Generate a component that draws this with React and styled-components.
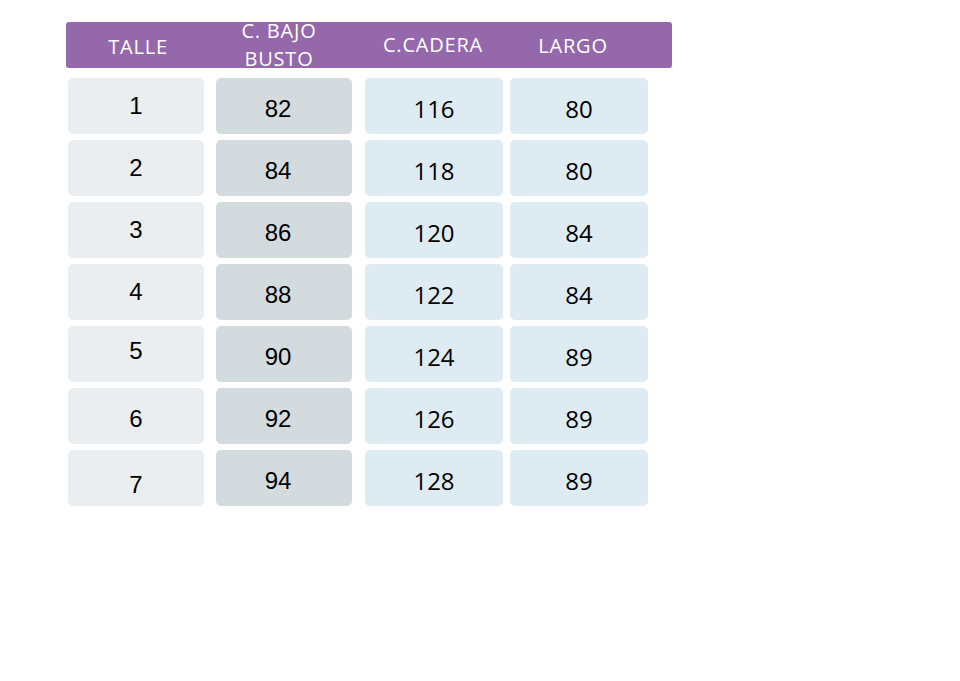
import React from "react";
import styled, { createGlobalStyle } from "styled-components";

const Global = createGlobalStyle`
  html, body { margin: 0; padding: 0; background: #ffffff; }
  body {
    width: 960px;
    height: 681px;
    overflow: hidden;
    font-family: "Liberation Sans", Arial, sans-serif;
  }
`;

const Page = styled.main`
  padding: 22px 0 0 66px;
`;

const Table = styled.section`
  width: 606px;
  display: flex;
  flex-direction: column;
  gap: 10px;
`;

const HeaderBar = styled.div`
  height: 46px;
  background: #9468ab;
  border-radius: 3px;
  display: grid;
  grid-template-columns: 144px 138px 170px 110px;
  grid-template-rows: 46px;
  align-items: center;
`;

const HeadCell = styled.div`
  text-align: center;
  color: #ffffff;
  font-family: "Open Sans", "Noto Sans", sans-serif;
  font-size: 20px;
  font-weight: 500;
  letter-spacing: 0.8px;
  line-height: 28px;
  white-space: nowrap;
  padding-top: ${(p) => (p.$dy > 0 ? p.$dy * 2 : 0)}px;
  padding-bottom: ${(p) => (p.$dy < 0 ? -p.$dy * 2 : 0)}px;
`;

const Body = styled.div`
  display: grid;
  grid-template-columns: 148px 149px 145px 138px;
  grid-auto-rows: 56px;
  row-gap: 6px;
  padding-left: 2px;
`;

const kinds = {
  talle: { bg: "#ebeef1", w: 136, font: '"Liberation Sans", Arial, sans-serif', pr: 0, pt: 0 },
  busto: { bg: "#d4dbdf", w: 136, font: '"Liberation Sans", Arial, sans-serif', pr: 12, pt: 5 },
  cadera: { bg: "#deebf3", w: 138, font: '"Open Sans", "Noto Sans", sans-serif', pr: 0, pt: 5 },
  largo: { bg: "#deebf3", w: 138, font: '"Open Sans", "Noto Sans", sans-serif', pr: 0, pt: 5 },
};

const Cell = styled.div`
  width: ${(p) => kinds[p.$kind].w}px;
  box-sizing: border-box;
  background: ${(p) => kinds[p.$kind].bg};
  border-radius: 5px;
  display: flex;
  align-items: center;
  justify-content: center;
  color: #000000;
  font-family: ${(p) => kinds[p.$kind].font};
  font-size: 24px;
  line-height: 1;
  padding-right: ${(p) => kinds[p.$kind].pr}px;
  padding-top: ${(p) => kinds[p.$kind].pt + (p.$dy > 0 ? p.$dy * 2 : 0)}px;
  padding-bottom: ${(p) => (p.$dy < 0 ? -p.$dy * 2 : 0)}px;
`;

const rows = [
  { talle: "1", busto: "82", cadera: "116", largo: "80", dy: 0 },
  { talle: "2", busto: "84", cadera: "118", largo: "80", dy: 0 },
  { talle: "3", busto: "86", cadera: "120", largo: "84", dy: 0 },
  { talle: "4", busto: "88", cadera: "122", largo: "84", dy: 0 },
  { talle: "5", busto: "90", cadera: "124", largo: "89", dy: -3 },
  { talle: "6", busto: "92", cadera: "126", largo: "89", dy: 3 },
  { talle: "7", busto: "94", cadera: "128", largo: "89", dy: 7 },
];

export default function App() {
  return (
    <>
      <Global />
      <Page>
        <Table>
          <HeaderBar>
            <HeadCell $dy={2}>TALLE</HeadCell>
            <HeadCell>
              C. BAJO
              <br />
              BUSTO
            </HeadCell>
            <HeadCell>C.CADERA</HeadCell>
            <HeadCell $dy={1}>LARGO</HeadCell>
          </HeaderBar>
          <Body>
            {rows.map((r) => (
              <React.Fragment key={r.talle}>
                <Cell $kind="talle" $dy={r.dy}>{r.talle}</Cell>
                <Cell $kind="busto">{r.busto}</Cell>
                <Cell $kind="cadera">{r.cadera}</Cell>
                <Cell $kind="largo">{r.largo}</Cell>
              </React.Fragment>
            ))}
          </Body>
        </Table>
      </Page>
    </>
  );
}
